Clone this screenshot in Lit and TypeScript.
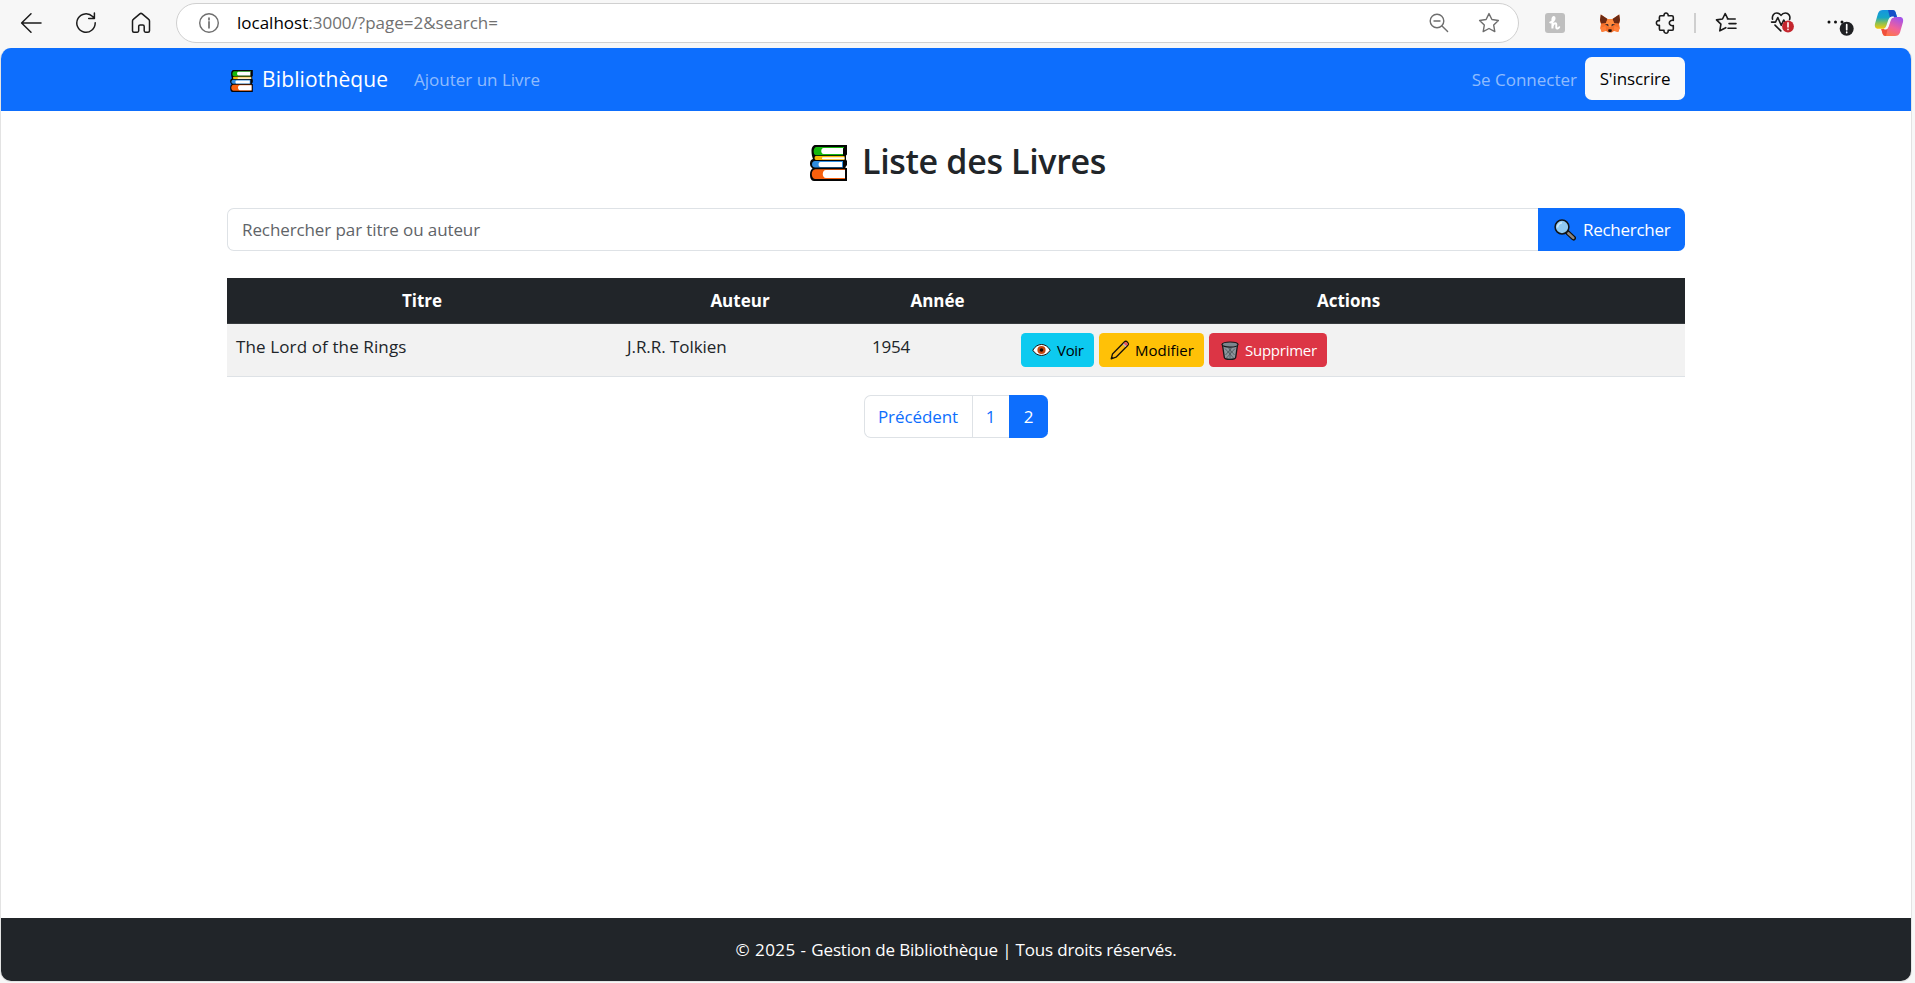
import { LitElement, html, css, svg } from "lit";
import { customElement, property } from "lit/decorators.js";

const icons = {
  back: svg`<svg width="22" height="22" viewBox="0 0 22 22" class="line"><path d="M21 11H1.8M11 1.8 1.6 11l9.4 9.2"/></svg>`,
  reload: svg`<svg width="22" height="22" viewBox="0 0 22 22" class="line"><path d="M20.2 10.8A9.2 9.2 0 1 1 17.6 4.6L19.2 6.2M19.4 1v5.6h-5.7"/></svg>`,
  home: svg`<svg width="20" height="22" viewBox="0 0 20 22" class="line"><path d="M1.5 9.1c0-.7.3-1.3.8-1.7l6.5-5.5c.7-.6 1.7-.6 2.4 0l6.5 5.5c.5.4.8 1 .8 1.7v9.6c0 .8-.6 1.5-1.5 1.5h-2.4c-.8 0-1.4-.6-1.4-1.4v-4.4c0-.8-.6-1.4-1.4-1.4H9.1c-.8 0-1.4.6-1.4 1.4v4.4c0 .8-.6 1.4-1.4 1.4H3c-.8 0-1.5-.7-1.5-1.5z"/></svg>`,
  info: svg`<svg width="22" height="22" viewBox="0 0 22 22" class="line soft"><circle cx="11" cy="11" r="9.3"/><path d="M11 9.8v6M11 6v1.8" stroke-width="1.7"/></svg>`,
  zoom: svg`<svg width="20" height="20" viewBox="0 0 20 20" class="line soft"><circle cx="8" cy="8" r="6.8"/><path d="M5 8h6M13 13l5.6 5.6"/></svg>`,
  star: svg`<svg width="22" height="22" viewBox="0 0 22 22" class="line soft"><path d="M11 1.6l2.9 5.9 6.5.95-4.7 4.6 1.1 6.5L11 16.5l-5.8 3.05 1.1-6.5-4.7-4.6 6.5-.95z"/></svg>`,
  honey: svg`<svg width="20" height="20" viewBox="0 0 20 20"><rect width="20" height="20" rx="3" fill="#bfbfbf"/><path d="M5.200 9.400c2.700-.5 5.200-2.800 4.200-5-.9-1-2 .2-2 2.200v9c0-3.300 1.400-5.600 3-5.400 1.700.2.4 3.400 1 4.800.5 1 1.900.6 2.800-.8" fill="none" stroke="#fff" stroke-width="2" stroke-linecap="round"/></svg>`,
  fox: svg`<svg width="20" height="19" viewBox="0 0 20 19"><path d="M.8.5 7.5 5h5L19.2.5 20 7l-1 3 .8 4-1.6 4-4.2-1-2.4 1.600H8.400L6 17l-4.200 1-1.600-4L1 10 0 7z" fill="#f5702a"/><path d="M.8.5 7.500 5 6 9 1 9.500 0 6zM19.200.5 12.500 5 14 9l5 .5L20 6z" fill="#6b2a14"/><path d="m7.500 5-2 5 3 3h3l3-3-2-5z" fill="#ff8a3d"/><path d="m.3 14 5.200-2 .8 4.500L1.800 18zm19.400 0-5.200-2-.8 4.500 4.500 1.500z" fill="#ff7f3a"/><path d="m4.900 10.300 3.200-.2.6 2.500zm10.200 0-3.200-.2-.6 2.500z" fill="#3b2a2e"/><path d="M8.500 15.200h3l.4 2-1.100.8H9.200l-1.100-.8z" fill="#26150f"/></svg>`,
  puzzle: svg`<svg width="22" height="22" viewBox="0 0 22 22" class="line thick"><path d="M5.800 3.800H9C8.800 2 9.800 1 11 1s2.400 1 2.200 2.800h3.700c.8 0 1.400.6 1.400 1.400v3.200c-2.200-.5-4 .8-4 2.600s1.800 3.100 4 2.600v3.300c0 .8-.6 1.400-1.400 1.400h-3.700c.2 1.700-.8 2.900-2.200 2.900s-2.200-1.200-2-2.900H5.800c-.8 0-1.400-.6-1.400-1.400v-3.600C2.500 13.500 1.400 12.500 1.400 11s1.100-2.600 3-2.300V5.200c0-.8.6-1.400 1.400-1.400z"/></svg>`,
  starList: svg`<svg width="22" height="22" viewBox="0 0 22 22" class="line thick"><path d="M13.400 6.800h-.6L10.200 1.500 7.500 7l-6 .9 4.400 4.200-1.100 6.800c2-1 3.800-2.200 6-3.200M12.500 7h7.700M14 11.600h7M13 16.300h8"/></svg>`,
  heart: svg`<svg width="26" height="24" viewBox="0 0 26 24" class="line thick"><path d="M2.500 8.200C1.800 4.400 4 2 6.700 2c1.900 0 3.300 1 4.300 2.400C12 3 13.500 2 15.400 2c3.300 0 5.300 3 4.200 6.600M1.500 11.100h4l2.300-4.600 3.400 7.800 2.500-5.300 1.300 2.200h4.500M5 14.100l5.800 5.800"/><circle cx="18" cy="15.500" r="5.900" fill="#c4262e" stroke="none"/><path d="M18 11.900v4M18 18.400v.2" stroke="#fff" stroke-width="1.600"/></svg>`,
  more: svg`<svg width="28" height="18" viewBox="0 0 28 18"><g fill="#111"><circle cx="3" cy="4" r="1.500"/><circle cx="9.500" cy="4" r="1.500"/><circle cx="16" cy="4" r="1.500"/></g><circle cx="20.700" cy="10.800" r="7" fill="#202124"/><path d="M20.700 6.700v5M20.700 14.200v.4" stroke="#fff" stroke-width="1.700" stroke-linecap="round"/></svg>`,
  copilot: svg`<svg width="30" height="28" viewBox="0 0 30 28"><defs>
    <linearGradient id="ca" x1="0" y1="0" x2="0" y2="1"><stop offset="0" stop-color="#1595e0"/><stop offset=".4" stop-color="#16a6c6"/><stop offset=".7" stop-color="#8cc152"/><stop offset="1" stop-color="#f6c80c"/></linearGradient>
    <linearGradient id="cb" x1=".7" y1="0" x2=".2" y2="1"><stop offset="0" stop-color="#a653e8"/><stop offset=".5" stop-color="#f0619b"/><stop offset="1" stop-color="#ff7a3c"/></linearGradient></defs>
    <path d="M9 1h9.500c2 0 2.800 1.200 3.300 3l1.200 4h-3.500c-2 0-3 1-3.600 3l-2 6c-.6 2-1.600 2.800-3.500 2.800H4c-2.600 0-3.600-2.300-3-5L4 4.500C4.800 2 6.500 1 9 1z" fill="url(#ca)"/>
    <path d="M14 1h4.500c2 0 2.800 1.200 3.300 3l1.200 4h-3.500c-1.600 0-2.600.7-3.200 2z" fill="#1650c8"/>
    <path d="M21 27h-9.500c-2 0-2.600-1-3.100-3L7.300 20h3.500c2 0 3-1 3.600-3l2-6c.6-2 1.600-2.900 3.500-2.900H26c2.600 0 3.600 2.300 3 5L26 23.500c-.8 2.500-2.500 3.500-5 3.500z" fill="url(#cb)"/>
    <path d="M7.300 20h3.500c1.600 0 2.600-.7 3.200-2l-2 9c-2 0-3-1-3.600-3z" fill="#f0503c"/>
    <path d="M17.800 8.200h2c-2 0-3 1-3.600 2.800l-2 6c-.4 1.500-1.200 2.600-2.400 2.800h-1.500c1.400-.2 2.100-1.200 2.600-2.800l2-6c.6-1.700 1.400-2.600 2.900-2.800z" fill="#f7f7f7" stroke="#f7f7f7" stroke-width="1.200"/></svg>`,
  books: svg`<svg class="books" viewBox="0 0 37 36"><path d="M5.500 0H37v9.500l-1 1v4l1 1.500v4l-1.500 2V23H37v13H4c-3 0-4-3-4-6.500 0-3 1-5 2.500-6C.5 22 0 20.500 0 18.500c0-2.500 1.200-4 3-4.500C2.200 12 1.500 9 1.500 6c0-3.500 1.500-6 4-6z" fill="#050505"/><path d="M6.500 2H34v1.300H13v5.500h20v1.400H6C2.600 10.200 3 2 6.500 2z" fill="#16b80e"/><path d="M13.500 3h19.500v6H13.500c-3 0-3-6 0-6z" fill="#fff"/><path d="M6 11h28.500v3.900H6c-1.900 0-1.900-3.900 0-3.900z" fill="#f5b90a"/><path d="M13 12.200h21.500v2H13c-1.400 0-1.400-2 0-2z" fill="#fff"/><path d="M5 16h28v6.600H5c-4 0-4-6.600 0-6.600z" fill="#2f8de0"/><path d="M10.500 17H32v5H10.500c-2.600 0-2.600-5 0-5z" fill="#fff"/><path d="M5.500 24.200H35V34H5.500c-5 0-5-9.800 0-9.800z" fill="#f7600d"/><path d="M16 25h19v8H16c-4.300 0-4.300-8 0-8z" fill="#fff"/></svg>`,
  search: svg`<svg width="22" height="22" viewBox="0 0 22 22"><path d="m13 13 6.500 6" stroke="#111" stroke-width="5" stroke-linecap="round"/><path d="m14.300 14.200 5 4.700" stroke="#8d8680" stroke-width="2.600" stroke-linecap="round"/><circle cx="8" cy="8" r="6.900" fill="#8fc9f2" stroke="#101418" stroke-width="1.500"/><path d="M3.500 8.500c.2-2.600 2-4.500 4.500-4.800" fill="none" stroke="#cbe8fb" stroke-width="1.600"/></svg>`,
  eye: svg`<svg width="19" height="14" viewBox="0 0 19 14"><path d="M.8 7.200C5 -.4 14 -.4 18.200 7.200 14 14.200 5 14.200.8 7.200z" fill="#fff" stroke="#1a0d08" stroke-width="1"/><circle cx="9.500" cy="7" r="4.100" fill="#c4470f"/><circle cx="9.500" cy="7" r="1.800" fill="#160a06"/></svg>`,
  pencil: svg`<svg width="20" height="20" viewBox="0 0 20 20"><path d="M1.200 18.800 2.500 14 14.300 2c2-2 5.200 1.200 3.600 3.200L6 17.200z" fill="#fbb813" stroke="#15110a" stroke-width="1.300" stroke-linejoin="round"/><path d="m14.600 2.600c1.500-1.400 3.900 1 2.700 2.500l-1 1-2.700-2.500z" fill="#e8506a"/><path d="m12.700 4.500 2.700 2.600 1-1-2.800-2.600z" fill="#b9bcc4"/><path d="m1.400 18.600.5-2.200 1.700 1.700z" fill="#15110a"/></svg>`,
  trash: svg`<svg width="18" height="19" viewBox="0 0 18 19"><path d="M1.500 4h15l-1.800 12.300c-.2 1.200-2.200 2-5.700 2s-5.500-.8-5.700-2z" fill="#8b949b" stroke="#16191b" stroke-width="1.300"/><ellipse cx="9" cy="3.600" rx="8" ry="2.600" fill="#7b868d" stroke="#16191b" stroke-width="1.200"/><path d="M4 7.500 12.500 17M7.500 7l6 7M14 7.500 5.500 17M10.500 7l-6 7M9 7v11" stroke="#4d565b" stroke-width=".8" fill="none"/></svg>`,
};

const shared = css`
  * { box-sizing: border-box; }
  svg { display: block; flex: none; }
  a { color: inherit; text-decoration: none; white-space: pre; }
`;

@customElement("browser-bar")
class BrowserBar extends LitElement {
  static styles = [shared, css`
    :host { display: flex; align-items: flex-start; height: 48px; padding: 3px 11px 0 20px; background: #f7f7f7; }
    .line { fill: none; stroke: #1b1b1b; stroke-width: 1.5; stroke-linecap: round; stroke-linejoin: round; }
    .soft { stroke: #6e6e6e; stroke-width: 1.4; }
    .thick { stroke-width: 1.6; }
    .slot { display: flex; align-items: center; justify-content: center; height: 40px; width: 22px; }
    .nav { display: flex; gap: 33px; width: 156px; }
    .address { display: flex; align-items: center; width: 1343px; height: 40px; padding: 0 18px 0 21px; border: 1.5px solid #d0d0d0; border-radius: 20px; background: #fff; color: #717171; font-size: 17px; line-height: 27px; }
    .url { flex: 1; padding: 0 0 2px 17px; }
    .host { color: #000; }
    .address .tail { display: flex; gap: 29px; align-items: center; }
    .tools { display: flex; flex: 1; margin-left: 24px; }
    .ext { width: 24px; margin-right: 31px; }
    .puzzle { width: 24px; margin: 0 16px 0 1px; }
    .rule { width: 2px; height: 20px; margin: 10px 19px 0 0; background: #cfcfcf; }
    .fav { margin-right: 33px; }
    .heart { width: 26px; margin-right: 30px; }
    .more { width: 28px; height: 48px; margin-right: 20px; }
    .copilot { width: 30px; }
  `];
  render() {
    return html`
      <div class="nav"><div class="slot">${icons.back}</div><div class="slot">${icons.reload}</div><div class="slot">${icons.home}</div></div>
      <div class="address">${icons.info}<div class="url"><span class="host">localhost</span>:3000/?page=2&amp;search=</div>
        <div class="tail">${icons.zoom}${icons.star}</div></div>
      <div class="tools">
        <div class="slot ext">${icons.honey}</div><div class="slot ext">${icons.fox}</div><div class="slot puzzle">${icons.puzzle}</div>
        <div class="rule"></div>
        <div class="slot fav">${icons.starList}</div><div class="slot heart">${icons.heart}</div>
        <div class="slot more">${icons.more}</div><div class="slot copilot">${icons.copilot}</div>
      </div>`;
  }
}

interface Book { title: string; author: string; year: number; }

@customElement("book-table")
class BookTable extends LitElement {
  @property({ attribute: false }) books: Book[] = [];
  static styles = [shared, css`
    :host { display: block; }
    .row { display: grid; grid-template-columns: 390px 246px 149px 1fr; }
    .cell { padding: 9px; }
    .head { height: 46px; background: #212529; border-bottom: 1px solid #373b3e; color: #fff; font-weight: 700; text-align: center; }
    .body { height: 53px; background: #f2f2f2; border-bottom: 1px solid #dee2e6; color: #212529; }
    .actions { display: flex; gap: 5px; }
    .btn { display: flex; align-items: center; height: 34px; border-radius: 4.5px; padding-left: 11px; font-size: 15px; line-height: 22px; color: #000; }
    .view { width: 73px; background: #0dcaf0; gap: 6px; letter-spacing: -.3px; }
    .edit { width: 105px; background: #ffc107; gap: 5px; }
    .drop { width: 118px; background: #dc3545; color: #fff; gap: 6px; letter-spacing: -.25px; padding-left: 12px; }
    .title { letter-spacing: .12px; }
    .author { padding-left: 10px; letter-spacing: -.06px; }
    .year { letter-spacing: -.2px; }
  `];
  render() {
    return html`
      <div class="row head"><div class="cell">Titre</div><div class="cell">Auteur</div><div class="cell">Année</div><div class="cell">Actions</div></div>
      ${this.books.map((b) => html`<div class="row body">
        <div class="cell title">${b.title}</div><div class="cell author">${b.author}</div><div class="cell year">${b.year}</div>
        <div class="cell actions"><a class="btn view">${icons.eye}Voir</a><a class="btn edit">${icons.pencil}Modifier</a><a class="btn drop">${icons.trash}Supprimer</a></div>
      </div>`)}`;
  }
}

@customElement("app-root")
class AppRoot extends LitElement {
  static styles = [shared, css`
    :host { display: block; height: 983px; overflow: hidden; background: #f7f7f7; font: 17px/27px "Open Sans", "Noto Sans", sans-serif; color: #212529; }
    .page { display: flex; flex-direction: column; width: 1912px; height: 934px; border: 1px solid #e3e3e3; border-top: 0; border-radius: 11px; background: #fff; overflow: hidden; }
    .wrap { width: 1458px; margin: 0 auto; }
    .navbar { height: 63px; background: #0d6efd; color: rgba(255,255,255,.55); }
    .navbar .wrap { display: flex; align-items: center; height: 63px; padding-left: 3px; }
    .brand { display: flex; align-items: center; gap: 9px; width: 184px; color: #fff; font-size: 21px; letter-spacing: .14px; }
    .brand .books { width: 23px; height: 22px; margin-top: 3px; }
    .login { margin-left: auto; }
    .signup { height: 43px; width: 100px; margin: -2px 0 0 8px; padding: 8px 0; border-radius: 6.75px; background: #f8f9fa; color: #000; text-align: center; letter-spacing: -.1px; }
    main { flex: 1; }
    h1 { display: flex; align-items: center; justify-content: center; gap: 15px; height: 54px; margin: 23px 0 20px; padding-left: 4px; font-size: 34px; line-height: 54px; font-weight: 600; letter-spacing: -.35px; }
    h1 .books { width: 37px; height: 36px; margin-top: 4px; }
    .search { display: flex; height: 43px; margin-bottom: 27px; }
    .field { flex: 1; padding: 7px 14px; border: 1px solid #dee2e6; border-right: 0; border-radius: 6.75px 0 0 6.75px; color: #5f6468; letter-spacing: -.1px; }
    .go { display: flex; align-items: center; gap: 7px; width: 147px; padding-left: 16px; border-radius: 0 6.75px 6.75px 0; background: #0d6efd; color: #fff; letter-spacing: -.28px; }
    .pages { display: flex; justify-content: center; margin-top: 18px; padding-right: 1px; color: #0d6efd; }
    .page-link { display: grid; place-items: center; height: 43px; border: 1px solid #dee2e6; border-right: 0; }
    .prev { width: 108px; border-radius: 6.75px 0 0 6.75px; letter-spacing: -.08px; }
    .num { width: 37px; }
    .active { width: 39px; border-color: #0d6efd; border-radius: 0 6.75px 6.75px 0; background: #0d6efd; color: #fff; }
    footer { display: flex; align-items: center; justify-content: center; height: 63px; background: #212529; color: #fff; letter-spacing: -.18px; white-space: pre; }
    .year { letter-spacing: .45px; }
  `];
  private books: Book[] = [{ title: "The Lord of the Rings", author: "J.R.R. Tolkien", year: 1954 }];
  render() {
    return html`
      <browser-bar></browser-bar>
      <div class="page">
        <div class="navbar"><div class="wrap">
          <a class="brand">${icons.books}Bibliothèque</a><a>Ajouter un Livre</a>
          <a class="login">Se Connecter</a><a class="signup">S'inscrire</a>
        </div></div>
        <main><div class="wrap">
          <h1>${icons.books}Liste des Livres</h1>
          <div class="search"><div class="field">Rechercher par titre ou auteur</div><a class="go">${icons.search}Rechercher</a></div>
          <book-table .books=${this.books}></book-table>
          <div class="pages"><a class="page-link prev">Précédent</a><a class="page-link num">1</a><a class="page-link active">2</a></div>
        </div></main>
        <footer><p><span class="year">© 2025 - </span>Gestion de Bibliothèque | Tous droits réservés.</p></footer>
      </div>`;
  }
}
